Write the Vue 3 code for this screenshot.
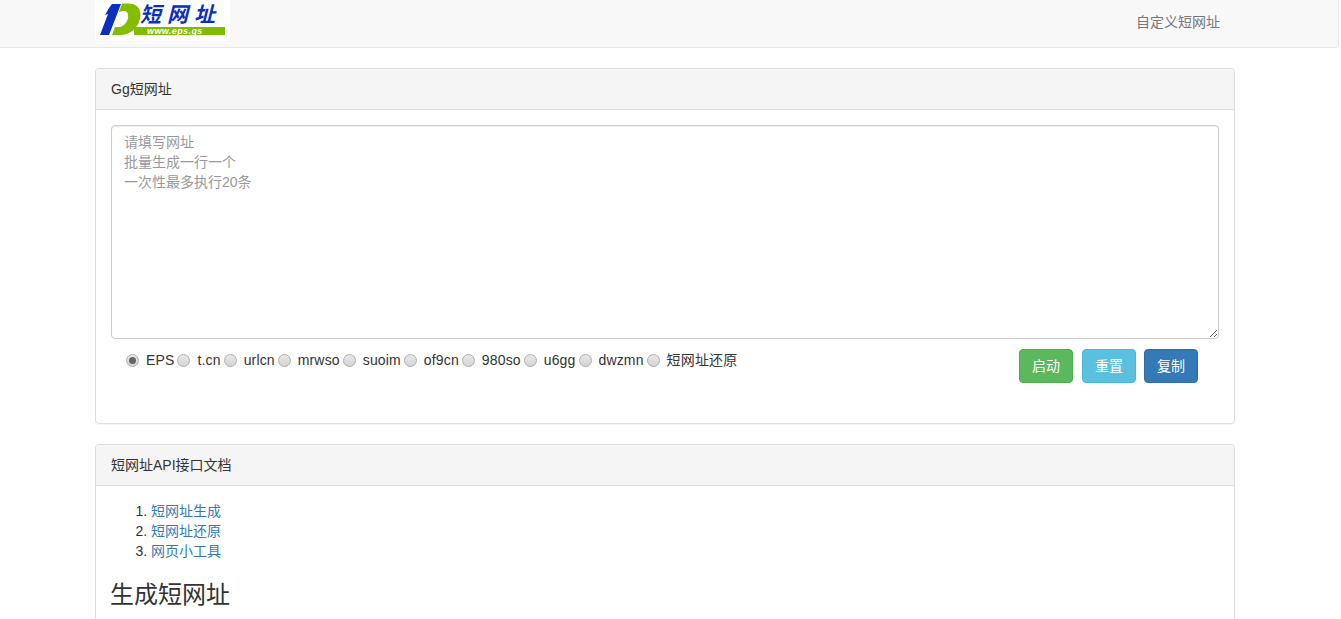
<script setup>
const radios = ['EPS', 't.cn', 'urlcn', 'mrwso', 'suoim', 'of9cn', '980so', 'u6gg', 'dwzmn', '短网址还原']
const links = ['短网址生成', '短网址还原', '网页小工具']
const placeholder = '请填写网址\n批量生成一行一个\n一次性最多执行20条'
</script>

<template>
  <div class="page">
    <nav class="navbar">
      <div class="nav-inner">
        <div class="logo">
          <svg class="logo-mark" width="46" height="41" viewBox="0 0 46 41">
            <path d="M17 4 L26 4 L14 35 L5 35 L13 14 L10 15 L14 8 Z" fill="#0a2fbf" />
            <path d="M27 3.5 L33 3.5 C43 3.5 47 10 45 19 C43 28 35 35 25 35 L17 35 L20 27 L25 27 C30 26 34 20 33 15 C33 12 31 11 28 11 L24 12 Z" fill="#84bd00" />
          </svg>
          <div class="logo-text">
            <div class="logo-cn">短网址</div>
            <div class="logo-url">www.eps.gs</div>
          </div>
        </div>
        <a class="nav-link">自定义短网址</a>
      </div>
    </nav>

    <main class="container">
      <section class="panel first">
        <header class="panel-head">Gg短网址</header>
        <div class="panel-body">
          <textarea class="area" :placeholder="placeholder"></textarea>
          <div class="controls">
            <div class="radios">
              <label v-for="(r, i) in radios" :key="r" class="radio">
                <span class="dot" :class="{ on: i === 0 }"></span><span class="radio-text">{{ r }}</span>
              </label>
            </div>
            <div class="buttons">
              <button class="btn green">启动</button>
              <button class="btn cyan">重置</button>
              <button class="btn blue">复制</button>
            </div>
          </div>
        </div>
      </section>

      <section class="panel">
        <header class="panel-head">短网址API接口文档</header>
        <div class="panel-body doc">
          <ol class="list">
            <li v-for="l in links" :key="l"><a>{{ l }}</a></li>
          </ol>
          <h3 class="title">生成短网址</h3>
        </div>
      </section>
    </main>
  </div>
</template>

<style>
html, body { margin: 0; height: 619px; overflow: hidden; background: #fff; }
</style>

<style scoped>
.page {
  height: 619px;
  overflow: hidden;
  color: #333;
  font: 14px/20px "Liberation Sans", "Noto Sans CJK SC", sans-serif;
}
.navbar {
  box-sizing: border-box;
  width: 1339px;
  height: 48px;
  background: #f8f8f8;
  border: 1px solid #e7e7e7;
  border-top: 0;
  border-left: 0;
  border-radius: 0 0 4px 0;
}
.nav-inner {
  display: flex;
  justify-content: space-between;
  width: 1140px;
  margin-left: 95px;
}
.logo {
  position: relative;
  width: 135px;
  height: 41px;
  background: #fff;
  overflow: hidden;
}
.logo-mark { position: absolute; left: 0; top: 0; }
.logo-text { padding: 2px 0 0 39px; }
.logo-cn {
  height: 25px;
  padding-left: 6px;
  color: #0a2fbf;
  font: italic bold 21px/25px "Liberation Sans", "Noto Sans CJK SC", sans-serif;
  letter-spacing: 6px;
  white-space: nowrap;
}
.logo-url {
  box-sizing: border-box;
  width: 91px;
  height: 8px;
  padding-left: 13px;
  background: #80bc00;
  color: #fff;
  font: italic bold 9px/8px "Liberation Sans", sans-serif;
  letter-spacing: 0.4px;
}
.nav-link {
  padding: 12px 15px 15px;
  color: #777;
}
.container {
  width: 1140px;
  margin: 20px 0 0 95px;
}
.panel {
  box-sizing: border-box;
  border: 1px solid #ddd;
  border-radius: 4px;
  box-shadow: 0 1px 1px rgba(0, 0, 0, .05);
  margin-bottom: 20px;
}
.panel.first { height: 356px; }
.panel-head {
  box-sizing: border-box;
  height: 41px;
  padding: 10px 15px;
  background: #f5f5f5;
  border-bottom: 1px solid #ddd;
  border-radius: 3px 3px 0 0;
}
.panel-body { padding: 15px; }
.area {
  display: block;
  box-sizing: border-box;
  width: 1108px;
  height: 214px;
  padding: 6px 12px;
  border: 1px solid #ccc;
  border-radius: 4px;
  box-shadow: inset 0 1px 1px rgba(0, 0, 0, .075);
  color: #555;
  font: inherit;
  outline: 0;
}
.area::placeholder { color: #999; opacity: 1; }
.controls {
  display: flex;
  justify-content: space-between;
  padding: 10px 21px 0 15px;
}
.radios { display: flex; gap: 3px; height: 24px; letter-spacing: 0.15px; }
.radio {
  display: flex;
  align-items: flex-start;
}
.dot {
  box-sizing: border-box;
  position: relative;
  width: 13px;
  height: 13px;
  margin-top: 5px;
  border: 1px solid #b0b0b0;
  border-radius: 50%;
  background: linear-gradient(#e8e8e8, #d4d4d4);
}
.dot.on::after {
  content: "";
  position: absolute;
  left: 2px;
  top: 2px;
  width: 7px;
  height: 7px;
  border-radius: 50%;
  background: #666;
}
.radio-text { margin: 1px 0 0 7px; }
.buttons { display: flex; }
.btn {
  box-sizing: border-box;
  width: 54px;
  height: 34px;
  padding: 0;
  border: 1px solid;
  border-radius: 4px;
  color: #fff;
  font: inherit;
}
.green { background: #5cb85c; border-color: #4cae4c; }
.cyan { background: #5bc0de; border-color: #46b8da; margin: 0 8px 0 9px; }
.blue { background: #337ab7; border-color: #2e6da4; }
.list { margin: 0 0 10px; padding-left: 40px; }
.list a { color: #337ab7; }
.title {
  margin: 21px 0 10px -1px;
  font-size: 24px;
  font-weight: 400;
  line-height: 26px;
}
</style>
